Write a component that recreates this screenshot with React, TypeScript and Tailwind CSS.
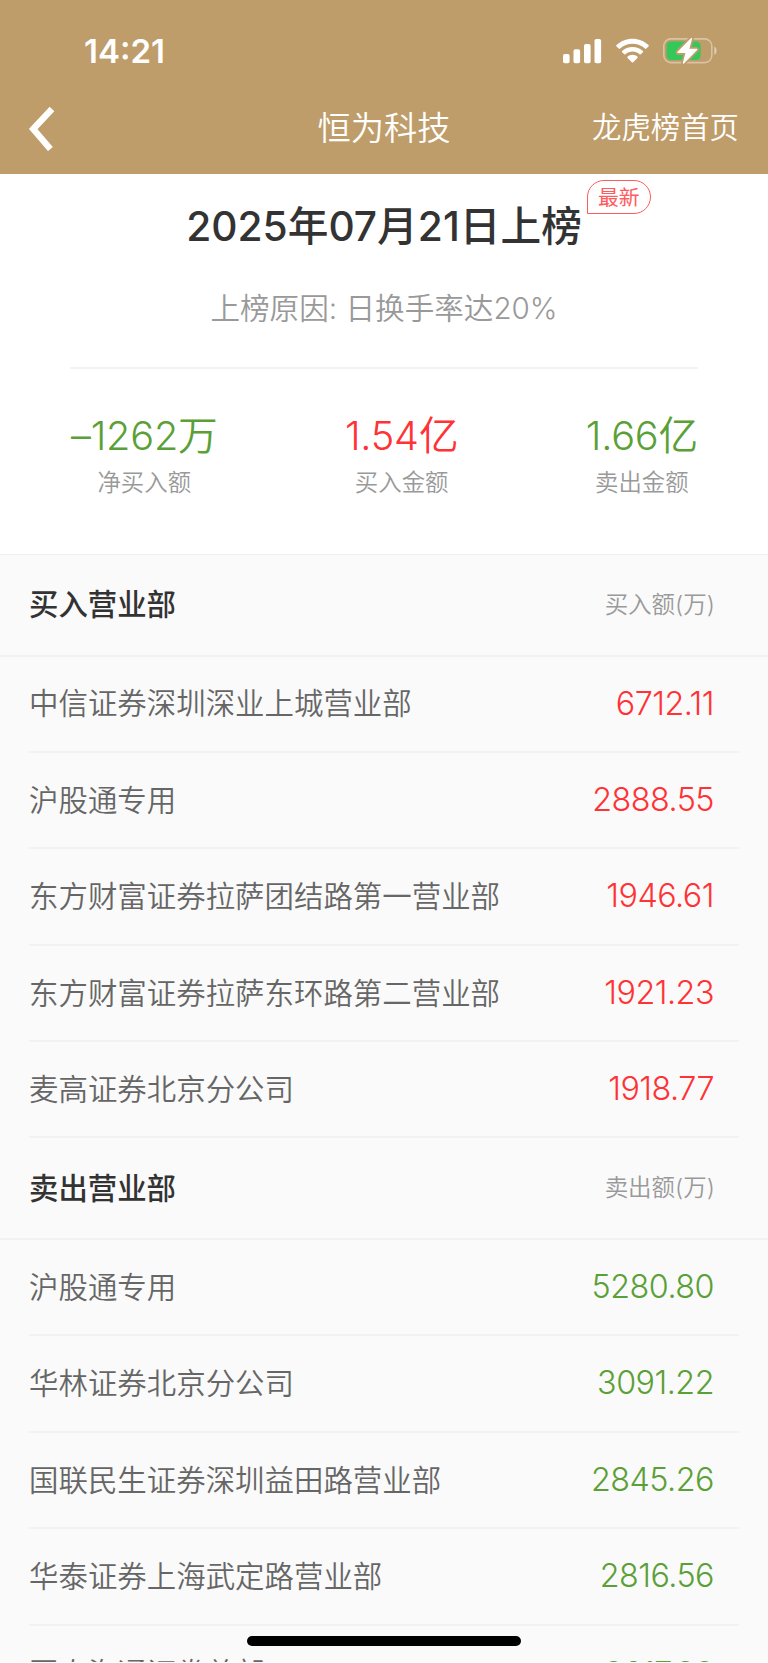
import React from 'react';
import { clsx } from 'clsx';

interface Branch {
  name: string;
  amount: string;
}

interface BranchSectionProps {
  title: string;
  unit: string;
  rows: Branch[];
  tone: 'buy' | 'sell';
}

const buyRows: Branch[] = [
  { name: '中信证券深圳深业上城营业部', amount: '6712.11' },
  { name: '沪股通专用', amount: '2888.55' },
  { name: '东方财富证券拉萨团结路第一营业部', amount: '1946.61' },
  { name: '东方财富证券拉萨东环路第二营业部', amount: '1921.23' },
  { name: '麦高证券北京分公司', amount: '1918.77' },
];

const sellRows: Branch[] = [
  { name: '沪股通专用', amount: '5280.80' },
  { name: '华林证券北京分公司', amount: '3091.22' },
  { name: '国联民生证券深圳益田路营业部', amount: '2845.26' },
  { name: '华泰证券上海武定路营业部', amount: '2816.56' },
  { name: '国泰海通证券总部', amount: '2617.32' },
];

const stats = [
  { value: '–1262万', label: '净买入额', color: 'text-[#5aa037]' },
  { value: '1.54亿', label: '买入金额', color: 'text-[#ff3236]' },
  { value: '1.66亿', label: '卖出金额', color: 'text-[#5aa037]' },
];

const StatusIcons = () => (
  <div className="flex items-center text-white">
    <svg width="39" height="26" viewBox="0 0 39 26" fill="currentColor">
      <rect x="0" y="16" width="6.6" height="9.2" rx="1.8" />
      <rect x="10.5" y="11.3" width="6.6" height="13.9" rx="1.8" />
      <rect x="21" y="6" width="6.6" height="19.2" rx="1.8" />
      <rect x="31.5" y="1" width="6.6" height="24.2" rx="1.8" />
    </svg>
    <svg className="ml-[14px]" width="33" height="26" viewBox="0 0 33 26" fill="currentColor">
      <path d="M16.5 .8C22.7 .8 28.300 3.200 32.500 7.100C32.900 7.500 32.900 8 32.500 8.400L30.300 10.600C29.900 11 29.400 11 29 10.600C25.600 7.400 21.200 5.700 16.500 5.700S7.400 7.400 4 10.600C3.600 11 3.100 11 2.700 10.600L.5 8.400C.1 8 .1 7.500 .5 7.100C4.700 3.200 10.300 .8 16.500 .8Z" />
      <path d="M16.5 8.900C20.500 8.900 24.100 10.400 26.900 12.900C27.300 13.300 27.300 13.800 26.900 14.200L24.700 16.300C24.300 16.700 23.900 16.700 23.500 16.300C21.600 14.600 19.200 13.600 16.500 13.600S11.400 14.600 9.500 16.300C9.100 16.700 8.700 16.700 8.300 16.300L6.100 14.200C5.700 13.800 5.700 13.300 6.100 12.900C8.900 10.400 12.500 8.900 16.500 8.900Z" />
      <path d="M16.500 16.800C18.400 16.800 20.100 17.500 21.400 18.600C21.800 19 21.800 19.500 21.400 19.900L17.200 24.200C16.800 24.600 16.200 24.600 15.800 24.200L11.600 19.900C11.200 19.500 11.200 19 11.600 18.600C12.900 17.500 14.600 16.800 16.500 16.800Z" />
    </svg>
    <svg className="ml-[13px]" width="56" height="28" viewBox="0 0 56 28">
      <rect x="1.800" y="1.900" width="48" height="23.700" rx="7" fill="none" stroke="#fff" strokeOpacity=".4" strokeWidth="1.600" />
      <path d="M52.300 9.500c3 1.200 3 7.300 0 8.500Z" fill="#fff" fillOpacity=".5" />
      <rect x="4.600" y="4.500" width="34" height="18.500" rx="4.500" fill="#34c759" />
      <path
        d="M28.800 1.300L15.600 14.800c-.5.600-.2 1.300.5 1.300h7.300L20.900 25.800c-.2.900.5 1.200 1.100.6L35.100 13c.5-.6.200-1.300-.5-1.300h-7.200L30 2c.2-.9-.6-1.300-1.200-.7Z"
        fill="#fff"
        stroke="#be9d6a"
        strokeWidth="3.600"
        strokeLinejoin="round"
        paintOrder="stroke"
      />
    </svg>
  </div>
);

const BranchSection: React.FC<BranchSectionProps> = ({ title, unit, rows, tone }) => (
  <section>
    <div className="flex h-[101.500px] items-center justify-between border-b-2 border-[#f2f2f2] pr-[53px] pl-[29px]">
      <h2 className="text-[29.400px] font-medium text-[#333]">{title}</h2>
      <span className="text-[23.500px] font-[350] text-[#999]">{unit}</span>
    </div>
    <ul className="px-[29px]">
      {rows.map((row) => (
        <li
          key={row.name}
          className={clsx(
            'flex h-[96.400px] items-center justify-between border-b-2 border-[#f2f2f2] pr-[25px]',
            tone === 'sell' && 'last:pt-[2px]'
          )}
        >
          <span className="pt-px text-[29.450px] font-[350] text-[#666]">{row.name}</span>
          <span
            className={clsx(
              'text-[32.300px] font-[350] tracking-[-0.500px]',
              tone === 'buy' ? 'text-[#ff3236]' : 'text-[#5aa037]'
            )}
          >
            {row.amount}
          </span>
        </li>
      ))}
    </ul>
  </section>
);

export default function App() {
  return (
    <div className="relative h-[1662px] w-[768px] overflow-hidden bg-[#fafafa] font-['Inter','Noto_Sans_CJK_SC',sans-serif] leading-none whitespace-nowrap">
      <header className="h-[174px] bg-[#be9d6a] text-white">
        <div className="flex h-[102px] items-center justify-between pr-[50px] pl-[84px]">
          <span className="pt-px text-[33px] font-semibold">14:21</span>
          <StatusIcons />
        </div>
        <div className="grid h-[52px] grid-cols-3 items-center px-[29px]">
          <svg width="26" height="46" viewBox="0 0 26 46" fill="none" stroke="#fff" strokeWidth="6.400">
            <path d="M23 4L4.200 24L21.400 44" />
          </svg>
          <h1 className="pt-[2px] text-center text-[33.300px] font-[350]">恒为科技</h1>
          <span className="text-right text-[29.400px] font-[350]">龙虎榜首页</span>
        </div>
      </header>

      <div className="h-[380px] bg-white">
        <div className="mx-[70px] flex h-[195px] flex-col items-center border-b-2 border-[#f2f2f2]">
          <div className="relative mt-[33px] text-[40.700px] font-[450] text-[#333]">
            2025年07月21日上榜
            <span className="absolute -top-[27px] left-full ml-[5px] flex h-[34px] w-[64px] items-center justify-center rounded-[17px] rounded-bl-none border border-[#ff5a5e] pt-[2px] text-[20.800px] font-normal text-[#ff5a5e]">
              最新
            </span>
          </div>
          <p className="mt-[46px] text-[29.600px] font-[350] text-[#999]">上榜原因: 日换手率达20%</p>
        </div>
        <div className="mr-[70px] ml-[71px] flex justify-between pt-[48px]">
          {stats.map((stat) => (
            <div key={stat.label} className="flex flex-col items-center">
              <span className={clsx('text-[39.700px] font-[350] tracking-[-0.200px]', stat.color)}>{stat.value}</span>
              <span className="mt-[14px] text-[23.400px] font-[350] text-[#999]">{stat.label}</span>
            </div>
          ))}
        </div>
      </div>

      <div className="border-t border-[#eee]">
        <BranchSection title="买入营业部" unit="买入额(万)" rows={buyRows} tone="buy" />
        <BranchSection title="卖出营业部" unit="卖出额(万)" rows={sellRows} tone="sell" />
      </div>

      {/* home indicator */}
      <div className="absolute bottom-[16px] left-[247px] h-[10px] w-[274px] rounded-full bg-black" />
    </div>
  );
}
